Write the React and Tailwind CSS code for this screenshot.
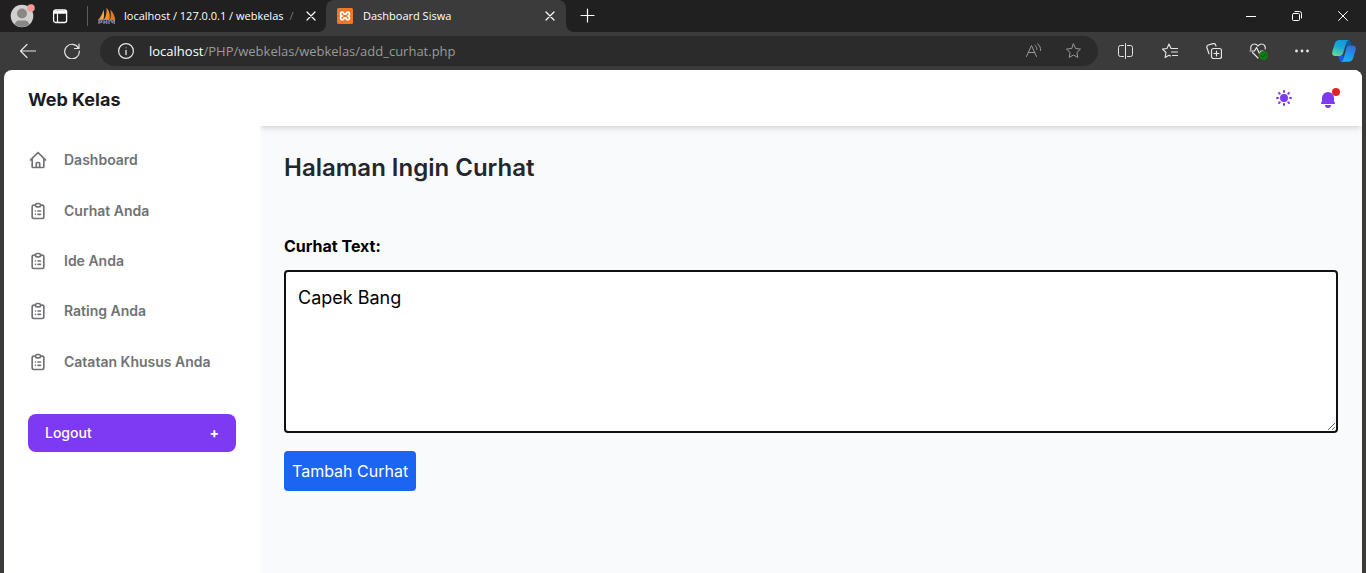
import React from "react";

const links = ["Dashboard", "Curhat Anda", "Ide Anda", "Rating Anda", "Catatan Khusus Anda"];

function Line({ size = 16, className = "", children, ...rest }) {
  return (
    <svg width={size} height={size} viewBox={`0 0 ${size} ${size}`} fill="none" stroke="currentColor" strokeWidth="1" strokeLinecap="round" strokeLinejoin="round" className={`shrink-0 ${className}`} aria-hidden="true" {...rest}>
      {children}
    </svg>
  );
}

const Close = () => (
  <Line size={10}>
    <path d="M1 1l8 8M9 1L1 9" strokeWidth="1.2" />
  </Line>
);

function TabStrip() {
  return (
    <div className="flex h-8 items-stretch bg-[#3b3b3b] text-white">
      <div className="flex w-[326px] shrink-0 items-center rounded-br-lg bg-[#202020] pl-2.5">
        <button aria-label="Profile">
          <svg width="26" height="26" viewBox="0 0 26 26" className="block">
            <defs>
              <clipPath id="face"><circle cx="12" cy="13" r="11" /></clipPath>
            </defs>
            <circle cx="12" cy="13" r="11.3" fill="#d2d0ce" />
            <g clipPath="url(#face)" fill="#8a8886">
              <circle cx="12" cy="10.5" r="5" />
              <path d="M4.500 24c0-4.500 2-6.500 4.500-6.500h6c2.500 0 4.500 2 4.500 6.500z" />
            </g>
            <circle cx="21" cy="5" r="3.800" fill="#f69a94" />
          </svg>
        </button>
        <button aria-label="Tab actions" className="ml-4">
          <Line>
            <rect x="1.600" y="2" width="13" height="12.500" rx="2" strokeWidth="1.300" />
            <path d="M2 3.500h12.500M2 5h12.500" strokeWidth="1.500" />
            <path d="M5.500 5v9" strokeWidth="1.200" />
          </Line>
        </button>
        <span className="ml-[19px] h-5 w-px bg-[#5c5c5c]" />
        <svg width="18" height="18" viewBox="0 0 18 18" className="ml-2.5 shrink-0" aria-hidden="true">
          <path d="M0 13C2.500 10.500 4.500 7 5.500 2.500c.8 3.500.8 7-.2 10.500z" fill="#f9a63a" />
          <path d="M5.800 13C8 9.500 9 5 8.500.5c3.300 4 4 8.500 2.800 12.500z" fill="#f68b1f" />
          <path d="M11.800 13c1.300-3 1.200-6.500.5-10.500 3.200 3 4.500 6.800 5 10.500z" fill="#e77817" />
          <path d="M1 17v-4h2.700v2.200H1M6 12.500V17M6 15h2.700v-2.500V17M11 17v-3.500h2l1.200 2 1.300-2h.8V17" fill="none" stroke="#7b7fa8" strokeWidth="1.400" />
        </svg>
        <div className="ml-2 flex w-[173px] overflow-hidden whitespace-nowrap text-[11px] leading-4">
          <span>localhost / 127.0.0.1 / webkelas</span>
          <span className="ml-1.5 text-[#777777]">/</span>
        </div>
        <button aria-label="Close tab" className="ml-[9px]"><Close /></button>
      </div>
      <div className="flex w-60 shrink-0 bg-[#202020]">
        <div className="flex flex-1 items-center rounded-t-lg bg-[#3b3b3b] px-[11px]">
          <svg width="16" height="16" viewBox="0 0 16 16" className="shrink-0" aria-hidden="true">
            <rect width="16" height="16" rx="1.500" fill="#f37623" />
            <path d="M5.200 4.200C3 4.200 3 7 4.800 8 3 9 3 11.800 5.200 11.800c1.300 0 1.500-1 2-2h1.600c.5 1 .7 2 2 2 2.200 0 2.200-2.800.4-3.800 1.800-1 1.800-3.800-.4-3.800-1.300 0-1.500 1-2 2H7.200c-.5-1-.7-2-2-2z" fill="none" stroke="#fff" strokeWidth="1.800" />
          </svg>
          <span className="ml-2.5 flex-1 text-[11px] leading-4">Dashboard Siswa</span>
          <button aria-label="Close tab"><Close /></button>
        </div>
      </div>
      <div className="flex flex-1 items-stretch rounded-bl-lg bg-[#202020]">
        <button aria-label="New tab" className="ml-3.5 flex items-center">
          <Line><path d="M7.500 1v13M1 7.500h13" strokeWidth="1.200" /></Line>
        </button>
        <div className="ml-auto flex items-center gap-9 pr-[18px]">
          <button aria-label="Minimize"><Line size={10}><path d="M0 5.500h10" /></Line></button>
          <button aria-label="Restore">
            <Line size={10}>
              <rect x=".5" y="2.500" width="7" height="7" rx="1" />
              <path d="M3 .5h4.500a2 2 0 012 2V7" />
            </Line>
          </button>
          <button aria-label="Close window"><Line size={10}><path d="M.5.5l9 9M9.500.5l-9 9" /></Line></button>
        </div>
      </div>
    </div>
  );
}

const star = "M8 1l2.100 4.500 4.900.6-3.600 3.400.9 4.900L8 12l-4.300 2.400.9-4.900L1 6.100l4.900-.6z";

function Copilot() {
  return (
    <svg width="24" height="24" viewBox="0 0 24 24" className="block" aria-hidden="true">
      <defs>
        <linearGradient id="cpA" x1="0.600" y1="0" x2="0.200" y2="1">
          <stop offset="0" stopColor="#1499d8" />
          <stop offset=".45" stopColor="#18a9d8" />
          <stop offset="1" stopColor="#6fdc8c" />
        </linearGradient>
        <linearGradient id="cpB" x1="0.700" y1="0" x2="0.300" y2="1">
          <stop offset="0" stopColor="#2a6fe0" />
          <stop offset="1" stopColor="#18b4fb" />
        </linearGradient>
      </defs>
      <path d="M13 1h3.500c1.700 0 2.300 1.500 2.700 3l.6 2h-3c-2 0-2.800 1-3.300 2.600z" fill="#0b5c9e" />
      <path d="M6 17h4.500l1.500-1-1 7c-2.500 0-3.200-1-3.700-3z" fill="#2054e8" />
      <path d="M7.500 1H17c-1.800.3-2.500 1.700-3 3.400l-2.700 9.300C10.600 16 9.300 17 7.500 17H3.300C.5 17-.3 15 .4 12.300L2.800 4.600C3.500 2.400 5 1 7.500 1z" fill="url(#cpA)" />
      <path d="M16.500 6.500h4.200c2.800 0 3.600 2.200 2.900 4.600l-2.400 8c-.7 2.300-2.200 3.700-4.700 3.700H8c2 0 3-1.200 3.500-3l2.600-9.500c.5-2 .9-3.800 2.400-3.800z" fill="url(#cpB)" />
    </svg>
  );
}

function Toolbar() {
  return (
    <div className="flex h-[38px] items-center bg-[#3b3b3b] pl-5 pr-2.5 text-[#e6e6e6]">
      <button aria-label="Back"><Line><path d="M15.500 8H.7M7 1.500L.5 8 7 14.500" strokeWidth="1.200" /></Line></button>
      <button aria-label="Refresh" className="ml-7">
        <Line><path d="M14.500 5.200A7.300 7.300 0 1015.300 8M15 1v4.500h-4.500" strokeWidth="1.200" /></Line>
      </button>
      <div className="ml-5 flex h-[30px] min-w-0 flex-1 items-center rounded-full bg-[#2b2b2b] pl-[18px] pr-4">
        <Line>
          <circle cx="8" cy="8" r="7.400" strokeWidth="1.200" />
          <path d="M8 7.500v4" strokeWidth="1.300" />
          <circle cx="8" cy="4.800" r=".5" fill="currentColor" stroke="none" />
        </Line>
        <div role="textbox" aria-label="Address" className="ml-[15px] flex-1 whitespace-nowrap text-[13px] leading-5 text-[#9a9a9a]">
          <span className="text-white">localhost</span>/PHP/webkelas/webkelas/add_curhat.php
        </div>
        <button aria-label="Read aloud" className="text-[#9a9a9a]">
          <Line><path d="M.5 13.500L5.500 2.500 10.500 13.500M2.300 9.500h6.500M9 2.500c1.500 1 2 2.500 1.800 4M11.500.8c2.300 1.600 3.300 4 3 6.700" /></Line>
        </button>
        <button aria-label="Add to favorites" className="ml-6 text-[#9a9a9a]"><Line viewBox="0.5 0 16 16"><path d={star} /></Line></button>
      </div>
      <div className="ml-5 flex items-center gap-7">
        <button aria-label="Split screen">
          <Line><path d="M5.500 2.500h-3a2 2 0 00-2 2v7a2 2 0 002 2h3M9.500 2.500h3a2 2 0 012 2v7a2 2 0 01-2 2h-3M7.500.5v15" /></Line>
        </button>
        <button aria-label="Favorites">
          <Line><path d="M9 5.500L7 1 5 5.500l-4.500.6L4 9.500l-.9 4.900L7 12.200l1.500.8M9 5.500h6.500M9.500 9h6M10.500 12.500h5" strokeWidth="1.100" /></Line>
        </button>
        <button aria-label="Collections">
          <Line>
            <rect x="5.500" y="5.500" width="10" height="10" rx="2" strokeWidth="1.200" />
            <path d="M10.500 8v5M8 10.500h5M3 10.800L1 5c-.5-1.500 0-2.500 1.300-3L7 .7c1.200-.4 2.200 0 2.600 1.200L10 3" strokeWidth="1.200" />
          </Line>
        </button>
        <button aria-label="Browser essentials">
          <Line className="overflow-visible">
            <path d="M.8 6.500C.2 3 2 1 4.500 1 6 1 7 1.700 8 3c1-1.300 2-2 3.500-2 2.500 0 4.300 2 3.700 5M2.500 9.500L8 15M0 8h4.500l2-3.500 3 6L11 8h2" strokeWidth="1.200" />
            <circle cx="13.500" cy="12.500" r="4.500" fill="#107c10" stroke="none" />
            <path d="M11.800 12.700l1.200 1.200 2.300-2.600" stroke="#07400a" />
          </Line>
        </button>
        <button aria-label="Settings and more">
          <Line><g fill="currentColor" stroke="none"><circle cx="2.500" cy="8" r="1.400" /><circle cx="8" cy="8" r="1.400" /><circle cx="13.500" cy="8" r="1.400" /></g></Line>
        </button>
      </div>
      <button aria-label="Copilot" className="ml-[22px]"><Copilot /></button>
    </div>
  );
}

function NavIcon({ home }) {
  return (
    <svg className="h-5 w-5 shrink-0" fill="none" stroke="currentColor" strokeWidth="2" strokeLinecap="round" strokeLinejoin="round" viewBox="0 0 24 24" aria-hidden="true">
      {home ? (
        <path d="M3 12l2-2m0 0l7-7 7 7M5 10v10a1 1 0 001 1h3m10-11l2 2m-2-2v10a1 1 0 01-1 1h-3m-6 0a1 1 0 001-1v-4a1 1 0 011-1h2a1 1 0 011 1v4a1 1 0 001 1m-6 0h6" />
      ) : (
        <path d="M9 5H7a2 2 0 00-2 2v12a2 2 0 002 2h10a2 2 0 002-2V7a2 2 0 00-2-2h-2M9 5a2 2 0 002 2h2a2 2 0 002-2M9 5a2 2 0 012-2h2a2 2 0 012 2m-3 7h3m-3 4h3m-6-4h.01M9 16h.01" />
      )}
    </svg>
  );
}

function Sidebar() {
  return (
    <aside className="z-10 w-64 shrink-0 bg-white pt-4">
      <a href="#home" className="ml-6 block text-lg leading-7 font-bold text-[#1a1c23]">Web Kelas</a>
      <ul className="mt-[21px] grid h-[252px] auto-rows-fr px-6">
        {links.map((label, i) => (
          <li key={label} className="flex items-center">
            <a href="#page" className="flex items-center gap-4 text-sm font-semibold text-[#707275]">
              <NavIcon home={i === 0} />
              {label}
            </a>
          </li>
        ))}
      </ul>
      <div className="mt-[27px] px-6">
        <button className="flex h-[38px] w-full items-center justify-between rounded-lg bg-[#7e3af2] px-[17px] text-sm font-medium text-white">
          Logout
          <span className="font-bold" aria-hidden="true">+</span>
        </button>
      </div>
    </aside>
  );
}

function Main() {
  return (
    <div className="flex min-w-0 flex-1 flex-col bg-[#f9fafc]">
      <header className="flex h-14 items-center justify-end gap-6 bg-white px-6 text-[#7e3af2] shadow-md">
        <button aria-label="Toggle color mode">
          <svg className="block h-5 w-5" fill="currentColor" viewBox="0 0 20 20">
            <path fillRule="evenodd" clipRule="evenodd" d="M10 2a1 1 0 011 1v1a1 1 0 11-2 0V3a1 1 0 011-1zm4 8a4 4 0 11-8 0 4 4 0 018 0zm-.464 4.950l.707.707a1 1 0 001.414-1.414l-.707-.707a1 1 0 00-1.414 1.414zm2.120-10.607a1 1 0 010 1.414l-.706.707a1 1 0 11-1.414-1.414l.707-.707a1 1 0 011.414 0zM17 11a1 1 0 100-2h-1a1 1 0 100 2h1zm-7 4a1 1 0 011 1v1a1 1 0 11-2 0v-1a1 1 0 011-1zM5.050 6.464A1 1 0 106.465 5.050l-.708-.707a1 1 0 00-1.414 1.414l.707.707zm1.414 8.486l-.707.707a1 1 0 01-1.414-1.414l.707-.707a1 1 0 011.414 1.414zM4 11a1 1 0 100-2H3a1 1 0 000 2h1z" />
          </svg>
        </button>
        <button aria-label="Notifications" className="relative pt-1">
          <svg className="block h-5 w-5" fill="currentColor" viewBox="0 0 20 20">
            <path d="M10 2a6 6 0 00-6 6v3.586l-.707.707A1 1 0 004 14h12a1 1 0 00.707-1.707L16 11.586V8a6 6 0 00-6-6zM10 18a3 3 0 01-3-3h6a3 3 0 01-3 3z" />
          </svg>
          <span className="absolute top-0.5 -right-0.5 h-2 w-2 rounded-full bg-[#e02424]" />
        </button>
      </header>
      <main className="px-6 pt-6">
        <h2 className="text-2xl leading-9 font-semibold text-[#24262d]">Halaman Ingin Curhat</h2>
        <form className="mt-12" onSubmit={(e) => e.preventDefault()}>
          <label htmlFor="curhat" className="block text-base leading-6 font-bold text-black">Curhat Text:</label>
          <textarea id="curhat" defaultValue="Capek Bang" className="mt-3 block h-[163px] w-full resize-y rounded border-2 border-[#101010] bg-white px-3 py-3 text-lg leading-7 text-black outline-none" />
          <button className="mt-[18px] h-10 rounded bg-[#1c64f2] px-2 text-base text-white">Tambah Curhat</button>
        </form>
      </main>
    </div>
  );
}

export default function App() {
  return (
    <div className="flex min-h-screen flex-col bg-[#3b3a39] font-['Open_Sans',sans-serif]">
      <TabStrip />
      <Toolbar />
      <div className="mx-1 flex flex-1 overflow-hidden rounded-t-lg font-['Inter',sans-serif]">
        <Sidebar />
        <Main />
      </div>
    </div>
  );
}
